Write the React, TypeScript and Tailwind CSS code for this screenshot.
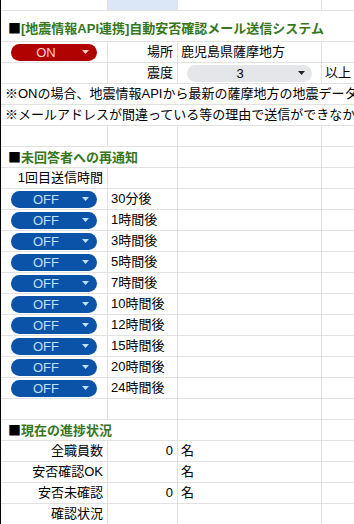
import { ReactNode } from 'react';

const OFF_ROWS = ['30分後', '1時間後', '3時間後', '5時間後', '7時間後', '10時間後', '12時間後', '15時間後', '20時間後', '24時間後'];

const cellA = 'w-[107px] shrink-0 border-r border-[#e2e2e2] flex items-center';
const cellB = 'w-[70px] shrink-0 border-r border-[#e2e2e2] flex items-center';
const cellC = 'w-[144px] shrink-0 border-r border-[#e2e2e2] flex items-center';
const cellD = 'flex-1 flex items-center';

function Row({ children }: { children?: ReactNode }) {
  return <div className="flex h-[21px] border-b border-[#e2e2e2]">{children}</div>;
}

function EmptyRow() {
  return (
    <Row>
      <div className={cellA} />
      <div className={cellB} />
      <div className={cellC} />
      <div className={cellD} />
    </Row>
  );
}

function Arrow({ color }: { color: string }) {
  return (
    <svg width="7" height="4" viewBox="0 0 7 4" className="shrink-0">
      <path d="M0 0 L7 0 L3.5 4 Z" fill={color} />
    </svg>
  );
}

function Chip({ label, on }: { label: string; on?: boolean }) {
  return (
    <div className={`w-full h-[17px] rounded-full flex items-center pr-[8px] ${on ? 'bg-[#b10202] text-[#ffcfc9]' : 'bg-[#0a53a8] text-[#bfe1f6]'}`}>
      <span className="flex-1 text-center text-[13px] leading-none mr-[1px]">{label}</span>
      <Arrow color={on ? '#ffcfc9' : '#bfe1f6'} />
    </div>
  );
}

function Heading({ children }: { children: ReactNode }) {
  return (
    <span className="font-bold text-[13px] whitespace-nowrap">
      <span className="font-['Noto_Sans_CJK_JP',sans-serif] text-black">■</span>
      <span className="text-[#38761d]">{children}</span>
    </span>
  );
}

export default function App() {
  return (
    <div className="w-[354px] h-[524px] overflow-hidden bg-white border-l border-black text-black text-[13px] font-['Liberation_Sans','Noto_Sans_CJK_JP',sans-serif]">
      {/* partial row above */}
      <div className="flex h-[11px] border-b border-[#e2e2e2]">
        <div className={cellA} />
        <div className="w-[70px] shrink-0 bg-[#dbe6f6] border-r border-[#e2e2e2]" />
        <div className={cellC} />
        <div className={cellD} />
      </div>

      {/* title */}
      <div className="h-[31px] border-b border-[#e2e2e2] flex items-end pb-[3px] pl-[7px]">
        <Heading>[地震情報API連携]自動安否確認メール送信システム</Heading>
      </div>

      <Row>
        <div className={`${cellA} px-[10px]`}><Chip label="ON" on /></div>
        <div className={`${cellB} justify-end pr-[4px]`}>場所</div>
        <div className={`${cellC} pl-[3px]`}>鹿児島県薩摩地方</div>
        <div className={cellD} />
      </Row>
      <Row>
        <div className={cellA} />
        <div className={`${cellB} justify-end pr-[4px]`}>震度</div>
        <div className={`${cellC} px-[9px]`}>
          <div className="w-full h-[17px] rounded-full bg-[#e4e6ea] flex items-center pr-[7px]">
            <span className="flex-1 text-center leading-none mr-[5px]">3</span>
            <Arrow color="#222" />
          </div>
        </div>
        <div className={`${cellD} pl-[3px] whitespace-nowrap`}>以上</div>
      </Row>
      <Row>
        <div className="flex items-center pl-[4px] whitespace-nowrap">※ONの場合、地震情報APIから最新の薩摩地方の地震データを取得します</div>
      </Row>
      <Row>
        <div className="flex items-center pl-[4px] whitespace-nowrap">※メールアドレスが間違っている等の理由で送信ができなかった場合</div>
      </Row>
      <EmptyRow />

      <Row>
        <div className="w-[177px] shrink-0 border-r border-[#e2e2e2] flex items-center pl-[7px]">
          <Heading>未回答者への再通知</Heading>
        </div>
        <div className={cellC} />
        <div className={cellD} />
      </Row>
      <Row>
        <div className={`${cellA} justify-end pr-[4px] whitespace-nowrap`}>1回目送信時間</div>
        <div className={cellB} />
        <div className={cellC} />
        <div className={cellD} />
      </Row>
      {OFF_ROWS.map(t => (
        <Row key={t}>
          <div className={`${cellA} px-[10px]`}><Chip label="OFF" /></div>
          <div className={`${cellB} pl-[3px] whitespace-nowrap`}>{t}</div>
          <div className={cellC} />
          <div className={cellD} />
        </Row>
      ))}
      <EmptyRow />

      <Row>
        <div className="w-[177px] shrink-0 border-r border-[#e2e2e2] flex items-center pl-[7px]">
          <Heading>現在の進捗状況</Heading>
        </div>
        <div className={cellC} />
        <div className={cellD} />
      </Row>
      {[
        ['全職員数', '0', '名'],
        ['安否確認OK', '', '名'],
        ['安否未確認', '0', '名'],
        ['確認状況', '', ''],
      ].map(([label, num, unit]) => (
        <Row key={label}>
          <div className={`${cellA} justify-end pr-[4px] whitespace-nowrap`}>{label}</div>
          <div className={`${cellB} justify-end pr-[4px]`}>{num}</div>
          <div className={`${cellC} pl-[3px]`}>{unit}</div>
          <div className={cellD} />
        </Row>
      ))}
    </div>
  );
}
